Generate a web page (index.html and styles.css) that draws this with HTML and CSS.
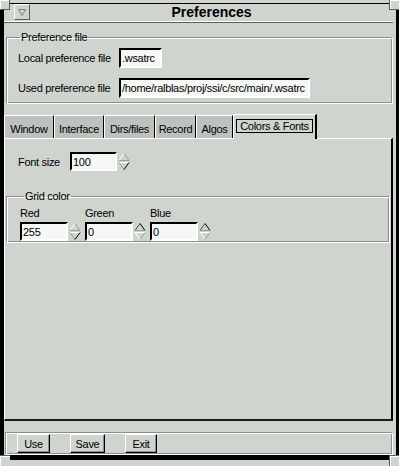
FILE: index.html
```html
<!DOCTYPE html>
<html lang="en">
<head>
    <meta charset="UTF-8">
    <meta name="viewport" content="width=device-width, initial-scale=1.0">
    <title>Preferences</title>
    <link rel="stylesheet" href="styles.css">
</head>
<body>
    <div class="frame">
        <div class="corner tl"></div>
        <div class="corner tr"></div>
        <div class="corner bl"></div>
        <div class="corner br"></div>

        <div class="titlebar">
            <div class="menu-btn">
                <svg width="8" height="7" viewBox="0 0 8 7"><path d="M0.5 0.5 H7.5 L4 6.5 Z" fill="none" stroke="#7c807c"/></svg>
            </div>
            <div class="title">Preferences</div>
        </div>

        <div class="client">
            <fieldset class="group pref-group">
                <legend>Preference file</legend>
                <div class="field-row">
                    <label class="pref-label">Local preference file</label>
                    <input class="entry short" type="text" value=".wsatrc">
                </div>
                <div class="field-row">
                    <label class="pref-label">Used preference file</label>
                    <input class="entry long" type="text" value="/home/ralblas/proj/ssi/c/src/main/.wsatrc">
                </div>
            </fieldset>

            <div class="tabs">
                <div class="tab" style="width: 50px">Window</div>
                <div class="tab" style="width: 50px">Interface</div>
                <div class="tab" style="width: 51px">Dirs/files</div>
                <div class="tab" style="width: 41px">Record</div>
                <div class="tab" style="width: 37px">Algos</div>
                <div class="tab active" style="width: 84px"><span class="focus">Colors &amp; Fonts</span></div>
            </div>

            <div class="panel">
                <div class="font-row">
                    <label class="font-label">Font size</label>
                    <input class="entry font-entry" type="text" value="100">
                    <svg class="spin" width="12" height="19" viewBox="0 0 12 19">
                        <path d="M1 8.5 L6 1.5" stroke="#fff"/>
                        <path d="M6 1.5 L11 8.5 H1" stroke="#9a9e9a"/>
                        <path d="M1 10.5 H11" stroke="#fff"/>
                        <path d="M1 10.5 L6 17.5" stroke="#9a9e9a"/>
                        <path d="M11 10.5 L6 17.5" stroke="#000"/>
                    </svg>
                </div>

                <fieldset class="group grid-group">
                    <legend>Grid color</legend>
                    <div class="channels">
                        <div class="channel">
                            <label>Red</label>
                            <div class="spin-row">
                                <input class="entry color-entry" type="text" value="255">
                                <svg class="spin" width="12" height="19" viewBox="0 0 12 19">
                                    <path d="M1 8.5 L6 1.5" stroke="#fff"/>
                                    <path d="M6 1.5 L11 8.5 H1" stroke="#9a9e9a"/>
                                    <path d="M1 10.5 H11" stroke="#fff"/>
                                    <path d="M1 10.5 L6 17.5" stroke="#9a9e9a"/>
                                    <path d="M11 10.5 L6 17.5" stroke="#000"/>
                                </svg>
                            </div>
                        </div>
                        <div class="channel">
                            <label>Green</label>
                            <div class="spin-row">
                                <input class="entry color-entry" type="text" value="0">
                                <svg class="spin" width="12" height="19" viewBox="0 0 12 19">
                                    <path d="M1 8.5 L6 1.5" stroke="#4a4e4a"/>
                                    <path d="M6 1.5 L11 8.5" stroke="#000"/>
                                    <path d="M1 8.5 H11" stroke="#9a9e9a"/>
                                    <path d="M1 10.5 H11 M1 10.5 L6 17.5" stroke="#fff"/>
                                    <path d="M11 10.5 L6 17.5" stroke="#9a9e9a"/>
                                </svg>
                            </div>
                        </div>
                        <div class="channel">
                            <label>Blue</label>
                            <div class="spin-row">
                                <input class="entry color-entry" type="text" value="0">
                                <svg class="spin" width="12" height="19" viewBox="0 0 12 19">
                                    <path d="M1 8.5 L6 1.5" stroke="#4a4e4a"/>
                                    <path d="M6 1.5 L11 8.5" stroke="#000"/>
                                    <path d="M1 8.5 H11" stroke="#9a9e9a"/>
                                    <path d="M1 10.5 H11 M1 10.5 L6 17.5" stroke="#fff"/>
                                    <path d="M11 10.5 L6 17.5" stroke="#9a9e9a"/>
                                </svg>
                            </div>
                        </div>
                    </div>
                </fieldset>
            </div>

            <div class="buttonbar">
                <button class="btn" style="width: 33px">Use</button>
                <button class="btn" style="width: 35px">Save</button>
                <button class="btn" style="width: 32px">Exit</button>
            </div>
        </div>

        <div class="frame-bottom"></div>
    </div>
</body>
</html>
```

FILE: styles.css
```css
body {
    margin: 0;
    font-family: "Liberation Sans", Arial, sans-serif;
    font-size: 11px;
    letter-spacing: -0.3px;
    color: #000;
    background-color: #cfd4cf;
}
.frame {
    position: relative;
    width: 399px;
    height: 466px;
    box-sizing: border-box;
    background-color: #cfd4cf;
    border-left: 4px solid #000;
    border-right: 3px solid #000;
    padding-top: 3px;
    display: flex;
    flex-direction: column;
}
.corner {
    position: absolute;
    width: 10px;
    height: 10px;
    background-color: #cfd4cf;
    box-shadow: inset 1px 1px #fff;
}
.corner.tl {
    left: -4px;
    top: 0;
    border-right: 1px solid #5b5f5b;
    border-bottom: 1px solid #5b5f5b;
    width: 9px;
    height: 9px;
}
.corner.tr {
    right: -3px;
    top: 0;
    border-left: 1px solid #5b5f5b;
    border-bottom: 1px solid #5b5f5b;
    width: 9px;
    height: 9px;
}
.corner.bl {
    left: -4px;
    bottom: 0;
    height: 11px;
    border-top: 1px solid #5b5f5b;
    height: 10px;
}
.corner.br {
    right: -3px;
    bottom: 0;
    border-top: 1px solid #5b5f5b;
    border-left: 1px solid #5b5f5b;
    width: 9px;
}
.titlebar {
    height: 18px;
    margin-right: 3px;
    border-top: 1px solid #000;
    border-bottom: 1px solid #5b5f5b;
    box-shadow: inset 0 -1px #fff;
    display: flex;
    align-items: flex-start;
}
.menu-btn {
    width: 16px;
    height: 16px;
    margin-left: 10px;
    box-sizing: border-box;
    border: 1px solid;
    border-color: #fff #5b5f5b #5b5f5b #fff;
    display: flex;
    justify-content: center;
    align-items: center;
}
.title {
    flex: 1;
    text-align: center;
    font-size: 14px;
    font-weight: bold;
    letter-spacing: 0;
    line-height: 17px;
}
.client {
    flex: 1;
    margin-right: 3px;
    display: flex;
    flex-direction: column;
}
.group {
    min-width: 0;
    border: 1px solid;
    border-color: #8c908c #fff #fff #8c908c;
    box-shadow: inset 1px 1px #fff, inset -1px -1px #8c908c;
}
.group legend {
    padding: 0 1px;
    line-height: 14px;
}
.pref-group {
    margin: 7px 0 0 2px;
    padding: 4px 10px 5px 11px;
}
.pref-group legend {
    margin-left: 2px;
}
.field-row {
    display: flex;
    align-items: center;
    height: 20px;
}
.field-row + .field-row {
    margin-top: 10px;
}
.pref-label {
    width: 101px;
}
.entry {
    box-sizing: border-box;
    height: 20px;
    margin: 0;
    padding: 0 1px;
    border: 2px solid;
    border-color: #000 #fff #fff #000;
    background-color: #f4f7f4;
    font: inherit;
    letter-spacing: inherit;
    color: #000;
    outline: none;
}
.short {
    width: 43px;
}
.long {
    width: 191px;
}
.tabs {
    display: flex;
    align-items: flex-end;
    height: 24px;
    margin-top: 10px;
}
.tab {
    height: 23px;
    box-sizing: border-box;
    padding-top: 3px;
    background-color: #bec2be;
    border-top: 1px solid #fff;
    border-left: 1px solid #fff;
    border-right: 1px solid #000;
    display: flex;
    justify-content: center;
    align-items: center;
}
.tab.active {
    position: relative;
    z-index: 1;
    height: 25px;
    margin-bottom: -1px;
    padding-top: 4px;
    align-items: flex-start;
    background-color: #cfd4cf;
    border-right: 2px solid #000;
}
.focus {
    border: 1px solid #000;
    padding: 0 3px;
    line-height: 12px;
}
.panel {
    flex: 1;
    padding-top: 13px;
    border-top: 1px solid #fff;
    border-left: 1px solid #fff;
    border-right: 2px solid #000;
    border-bottom: 2px solid #1c1c1c;
}
.font-row {
    display: flex;
    align-items: center;
    margin-left: 13px;
}
.font-label {
    width: 52px;
}
.font-entry {
    width: 47px;
    height: 19px;
}
.spin {
    margin-left: 1px;
    fill: none;
    stroke-width: 1;
}
.grid-group {
    margin: 18px 1px 0 1px;
    padding: 3px 10px 1px 13px;
}
.grid-group legend {
    margin-left: 4px;
}
.channels {
    display: flex;
    gap: 4px;
}
.channel {
    width: 61px;
}
.channel label {
    display: block;
    line-height: 14px;
    margin-bottom: 2px;
}
.spin-row {
    display: flex;
}
.color-entry {
    width: 48px;
    height: 19px;
}
.buttonbar {
    height: 23px;
    box-sizing: border-box;
    margin: 11px 0 0 1px;
    padding: 1px 0 0 11px;
    display: flex;
    gap: 20px;
    border: 1px solid;
    border-color: #8c908c #fff #fff #8c908c;
    box-shadow: inset 1px 1px #fff, inset -1px -1px #8c908c;
}
.btn {
    height: 19px;
    box-sizing: border-box;
    padding: 0;
    border: 1px solid;
    border-color: #fff #000 #000 #fff;
    box-shadow: inset -1px -1px #8c908c;
    background-color: #cfd4cf;
    font: inherit;
    letter-spacing: inherit;
    color: #000;
}
.frame-bottom {
    height: 6px;
    border-top: 5px solid #000;
}
```
